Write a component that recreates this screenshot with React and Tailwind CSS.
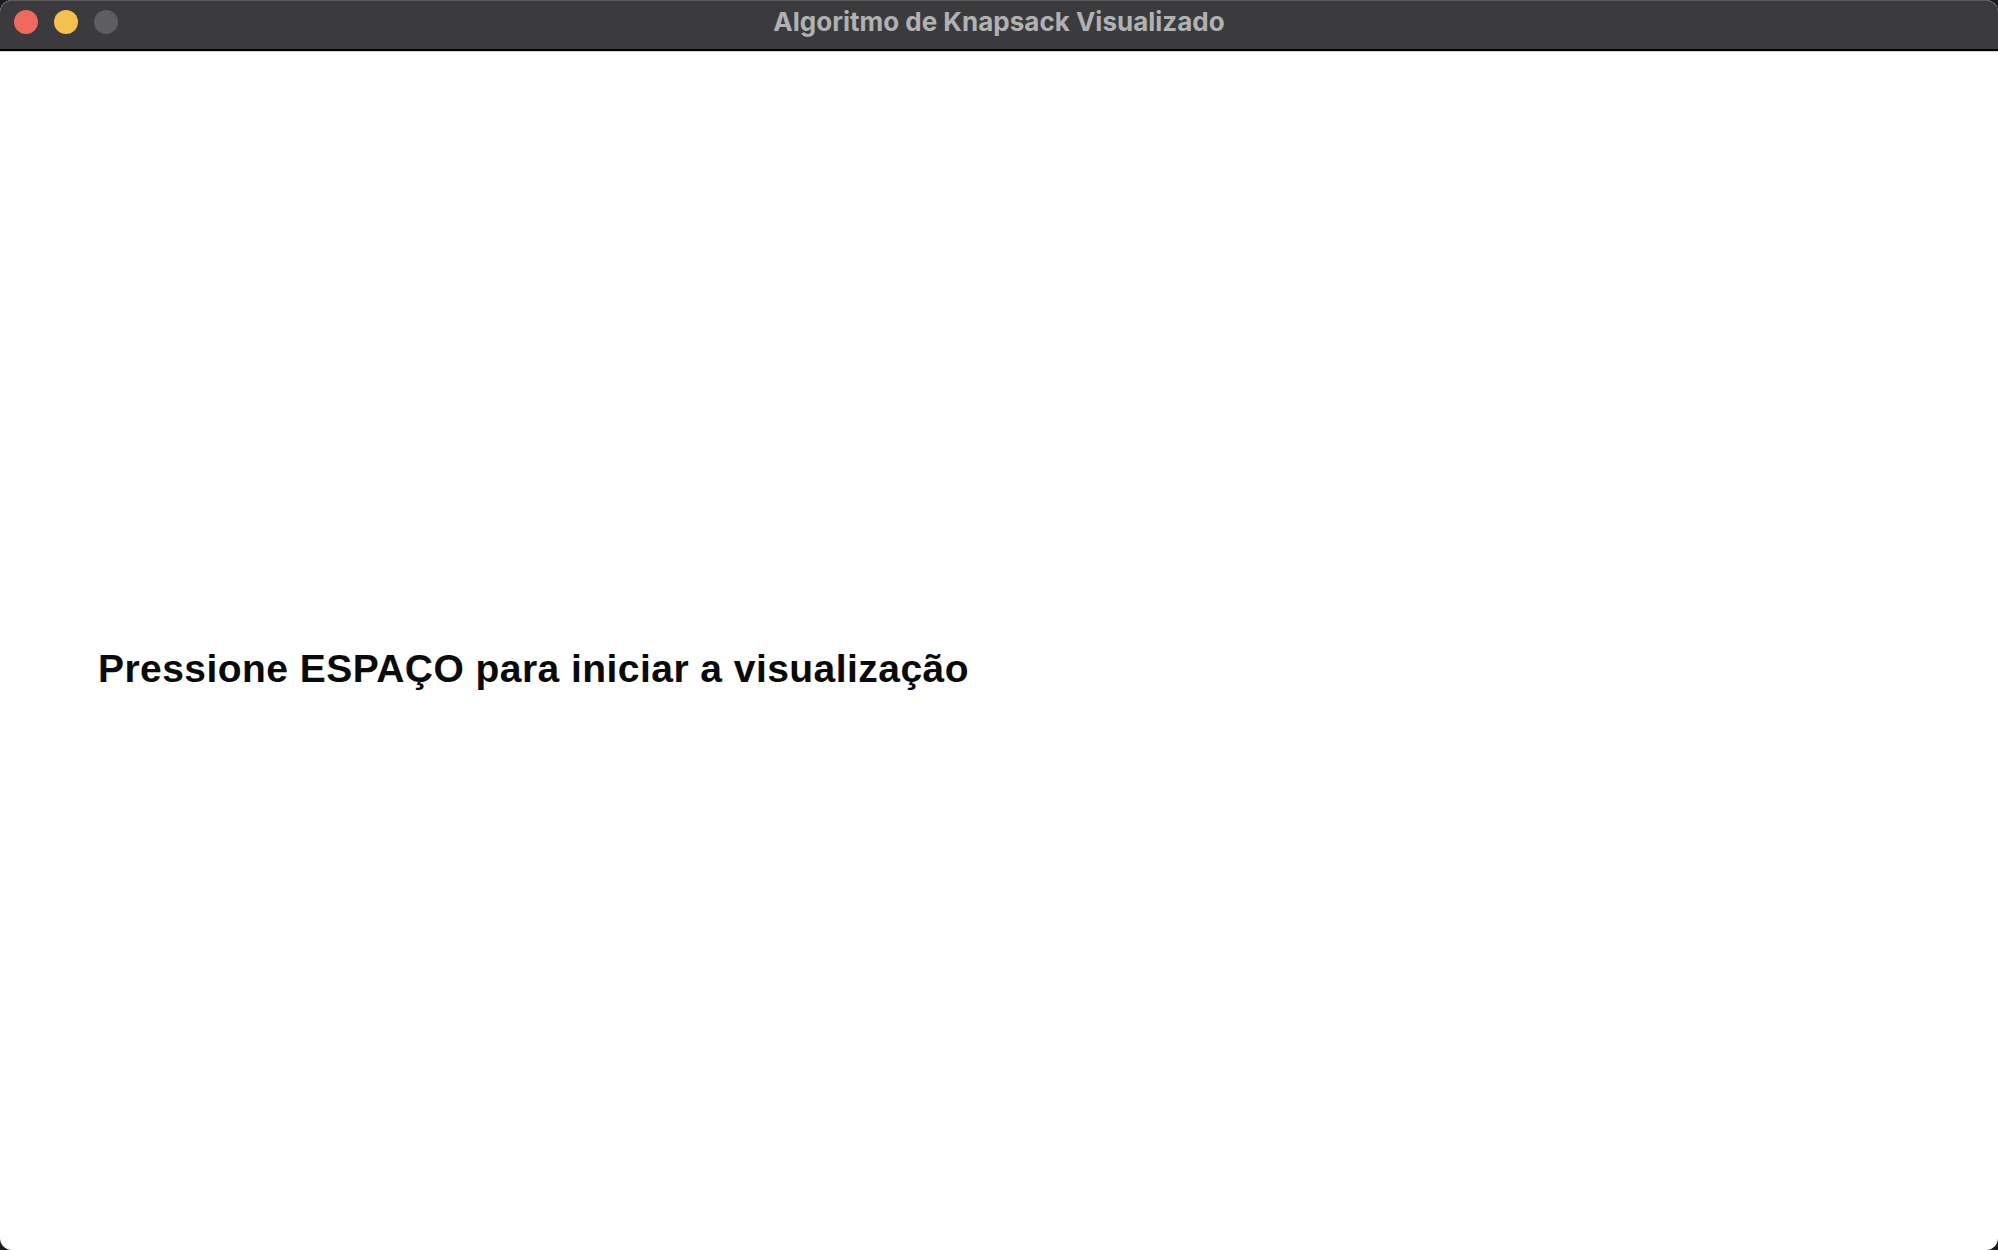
const TitleBar = () => {
  return (
    <div className="relative flex items-center justify-center h-[51px] bg-[#3b3b3d] border-b-2 border-black rounded-t-[12px] shadow-[inset_0_1px_0_#5c5c5e]">
      <div className="absolute left-[14px] top-[10px] flex items-center gap-[16px]">
        <span className="w-[24px] h-[24px] rounded-full bg-[#ee6a5f]" />
        <span className="w-[24px] h-[24px] rounded-full bg-[#f5c14e]" />
        <span className="w-[24px] h-[24px] rounded-full bg-[#5e5e60]" />
      </div>
      <h1 className="font-['Inter',sans-serif] font-bold text-[26px] leading-none pb-[5px] text-[#b1b1b3]">
        Algoritmo de Knapsack Visualizado
      </h1>
    </div>
  )
}

const App = () => {
  return (
    <div className="h-[1250px] w-[1998px] bg-[#1c1c1e] overflow-hidden">
      <div className="flex flex-col h-full rounded-[12px] bg-white overflow-hidden">
        <TitleBar />
        <div className="h-px bg-[#cfcfcf]" />
        <main className="flex-1 pt-[597px] pl-[98px]">
          <p className="font-['Liberation_Sans',Arial,sans-serif] font-bold text-[39px] leading-none tracking-[0.45px] text-[#0a0a0a]">
            Pressione ESPAÇO para iniciar a visualização
          </p>
        </main>
      </div>
    </div>
  )
}

export default App
